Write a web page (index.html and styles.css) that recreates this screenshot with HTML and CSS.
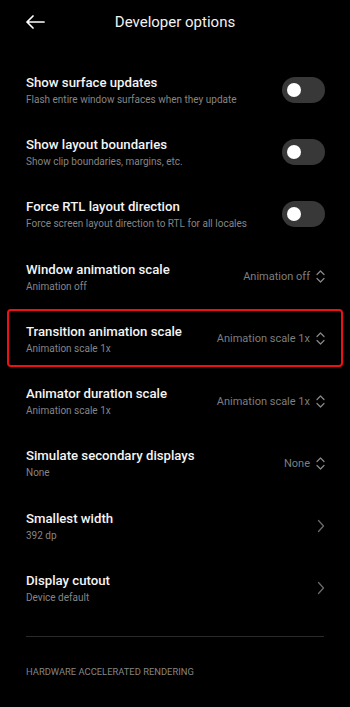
FILE: index.html
```html
<!DOCTYPE html>
<html>
<head>
<meta charset="utf-8">
<link rel="stylesheet" href="styles.css">
</head>
<body>
<div class="screen">
  <header class="topbar">
    <div class="back">
      <svg width="20" height="14" viewBox="0 0 20 14"><path d="M19 7H2M8 1L2 7l6 6" fill="none" stroke="#fff" stroke-width="1.7" stroke-linecap="round" stroke-linejoin="round"/></svg>
    </div>
    <div class="title">Developer options</div>
    <div></div>
  </header>

  <div class="list">
    <div class="row">
      <div class="text"><div class="t">Show surface updates</div><div class="s">Flash entire window surfaces when they update</div></div>
      <div class="toggle"><span class="knob"></span></div>
    </div>
    <div class="row">
      <div class="text"><div class="t">Show layout boundaries</div><div class="s">Show clip boundaries, margins, etc.</div></div>
      <div class="toggle"><span class="knob"></span></div>
    </div>
    <div class="row">
      <div class="text"><div class="t">Force RTL layout direction</div><div class="s">Force screen layout direction to RTL for all locales</div></div>
      <div class="toggle"><span class="knob"></span></div>
    </div>
    <div class="row">
      <div class="text"><div class="t">Window animation scale</div><div class="s">Animation off</div></div>
      <div class="value">Animation off<svg class="updown" width="9" height="15" viewBox="0 0 9 15"><path d="M1 5.5L4.5 2 8 5.5M1 9.5L4.5 13 8 9.5" fill="none" stroke="#8a8a8a" stroke-width="1.2" stroke-linecap="round" stroke-linejoin="round"/></svg></div>
    </div>
    <div class="row highlighted">
      <div class="text"><div class="t">Transition animation scale</div><div class="s">Animation scale 1x</div></div>
      <div class="value">Animation scale 1x<svg class="updown" width="9" height="15" viewBox="0 0 9 15"><path d="M1 5.5L4.5 2 8 5.5M1 9.5L4.5 13 8 9.5" fill="none" stroke="#8a8a8a" stroke-width="1.2" stroke-linecap="round" stroke-linejoin="round"/></svg></div>
      <div class="mark"></div>
    </div>
    <div class="row">
      <div class="text"><div class="t">Animator duration scale</div><div class="s">Animation scale 1x</div></div>
      <div class="value">Animation scale 1x<svg class="updown" width="9" height="15" viewBox="0 0 9 15"><path d="M1 5.5L4.5 2 8 5.5M1 9.5L4.5 13 8 9.5" fill="none" stroke="#8a8a8a" stroke-width="1.2" stroke-linecap="round" stroke-linejoin="round"/></svg></div>
    </div>
    <div class="row">
      <div class="text"><div class="t">Simulate secondary displays</div><div class="s">None</div></div>
      <div class="value">None<svg class="updown" width="9" height="15" viewBox="0 0 9 15"><path d="M1 5.5L4.5 2 8 5.5M1 9.5L4.5 13 8 9.5" fill="none" stroke="#8a8a8a" stroke-width="1.2" stroke-linecap="round" stroke-linejoin="round"/></svg></div>
    </div>
    <div class="row">
      <div class="text"><div class="t">Smallest width</div><div class="s">392 dp</div></div>
      <svg class="chev" width="8" height="14" viewBox="0 0 8 14"><path d="M1.5 1.5L6.5 7l-5 5.5" fill="none" stroke="#6a6a6a" stroke-width="1.3" stroke-linecap="round" stroke-linejoin="round"/></svg>
    </div>
    <div class="row">
      <div class="text"><div class="t">Display cutout</div><div class="s">Device default</div></div>
      <svg class="chev" width="8" height="14" viewBox="0 0 8 14"><path d="M1.5 1.5L6.5 7l-5 5.5" fill="none" stroke="#6a6a6a" stroke-width="1.3" stroke-linecap="round" stroke-linejoin="round"/></svg>
    </div>
  </div>

  <div class="divider"></div>
  <div class="section">HARDWARE ACCELERATED RENDERING</div>
</div>
</body>
</html>
```

FILE: styles.css
```css
html, body {
  margin: 0;
  padding: 0;
  background: #000;
}
body {
  font-family: Roboto, "Noto Sans", sans-serif;
  color: #fff;
  width: 350px;
  height: 707px;
  overflow: hidden;
}
.screen {
  display: flex;
  flex-direction: column;
}
.topbar {
  height: 43px;
  display: grid;
  grid-template-columns: 1fr auto 1fr;
  align-items: center;
}
.back {
  padding-left: 25px;
  display: flex;
  align-items: center;
  padding-top: 1px;
}
.title {
  font-size: 15px;
  font-weight: 400;
  color: #f2f2f2;
}
.list {
  margin-top: 15.5px;
  display: flex;
  flex-direction: column;
}
.row {
  height: 62.3px;
  padding: 0 26px;
  display: flex;
  align-items: center;
  justify-content: space-between;
  box-sizing: border-box;
  position: relative;
}
.text {
  display: flex;
  flex-direction: column;
}
.t {
  font-size: 13.2px;
  line-height: 17px;
  font-weight: 500;
  color: #f4f4f4;
}
.s {
  font-size: 10px;
  line-height: 13px;
  margin-top: 2px;
  color: #858585;
}
.toggle {
  width: 43px;
  height: 26px;
  border-radius: 13px;
  background: #383838;
  display: flex;
  align-items: center;
  padding-left: 5px;
  box-sizing: border-box;
  margin-right: -1px;
}
.knob {
  width: 14px;
  height: 14px;
  border-radius: 50%;
  background: #fff;
}
.value {
  display: flex;
  align-items: center;
  gap: 6px;
  font-size: 11px;
  color: #7e7e7e;
  margin-right: -1px;
}
.chev {
  margin-right: -1px;
}
.mark {
  position: absolute;
  left: 7px;
  right: 7px;
  top: 1px;
  bottom: 3px;
  border: 2.5px solid #ee1111;
  border-radius: 4px;
  pointer-events: none;
}
.divider {
  margin: 16.5px 26px 0;
  height: 1px;
  background: #2a2a2a;
}
.section {
  margin: 29px 26px 0;
  font-size: 9.4px;
  color: #858585;
}
```
